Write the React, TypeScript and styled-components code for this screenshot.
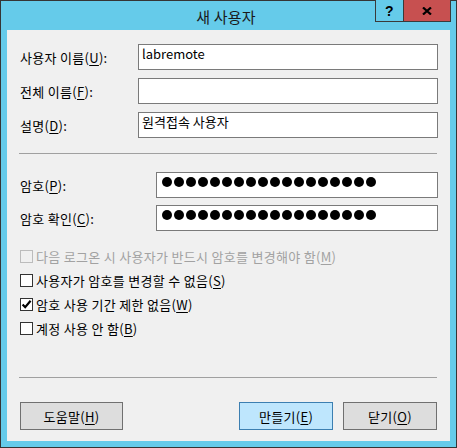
import React from "react";
import styled, { createGlobalStyle } from "styled-components";

const Global = createGlobalStyle`
  html, body { margin: 0; padding: 0; background: #ffffff; overflow: hidden; }
  body { font-family: "Noto Sans CJK KR", "Noto Sans", sans-serif; }
  * { box-sizing: border-box; }
`;

const FONT = `"Noto Sans CJK KR", "Noto Sans", sans-serif`;

const Window = styled.div`
  width: 457px;
  height: 448px;
  border: 1px solid #353535;
  background: #65cbea;
  padding: 0 6px 6px;
  display: flex;
  flex-direction: column;
  font-family: ${FONT};
  font-size: 13px;
  letter-spacing: 0.3px;
  color: #000;
`;

const TitleBar = styled.div`
  height: 29px;
  margin: 0 -6px;
  padding-right: 5px;
  display: grid;
  grid-template-columns: 1fr auto 1fr;
  align-items: start;
`;

const Title = styled.div`
  grid-column: 2;
  font-size: 15px;
  letter-spacing: 0.2px;
  line-height: 26px;
  padding-top: 3px;
  color: #1a1a1a;
  white-space: nowrap;
`;

const Caption = styled.div`
  grid-column: 3;
  justify-self: end;
  display: flex;
  margin-top: -1px;
  height: 22px;
  border-right: 1px solid #3a3a3a;
`;

const CaptionButton = styled.div<{ $close?: boolean }>`
  width: ${(p) => (p.$close ? 47 : 28)}px;
  height: 22px;
  border-left: 1px solid #3a3a3a;
  border-bottom: 1px solid #3a3a3a;
  background: ${(p) => (p.$close ? "#c75050" : "#65cbea")};
  display: flex;
  align-items: center;
  justify-content: center;
  font-family: "Liberation Sans", Arial, sans-serif;
  font-weight: bold;
  font-size: 14px;
  color: #000;
`;

const Client = styled.div`
  flex: 1;
  background: #f0f0f0;
  padding: 14px 12px 11px 12px;
  display: flex;
  flex-direction: column;
`;

const Fields = styled.div<{ $gap: number }>`
  display: flex;
  flex-direction: column;
  gap: ${(p) => p.$gap}px;
`;

const FieldRow = styled.div<{ $label: number }>`
  display: grid;
  grid-template-columns: ${(p) => p.$label}px 1fr;
  align-items: center;
  height: 26px;
`;

const Label = styled.label`
  padding-left: 1px;
  line-height: 17px;
  white-space: nowrap;
`;

const Key = styled.span`
  text-decoration: underline;
  text-underline-offset: 2px;
`;

const TextBox = styled.div`
  height: 26px;
  border: 1px solid #7a7a7a;
  background: #fff;
  padding: 0 3px;
  line-height: 18px;
  letter-spacing: 0;
  white-space: nowrap;
`;

const PassBox = styled.div`
  height: 26px;
  border: 1px solid #7a7a7a;
  background: #fff;
  padding: 4px 5px 0;
  display: flex;
  gap: 2px;
  align-items: flex-start;
`;

const Dot = styled.span`
  width: 10px;
  height: 10px;
  border-radius: 50%;
  background: #000;
  flex: none;
`;

const Separator = styled.div<{ $top: number; $bottom: number }>`
  height: 1px;
  background: #a0a0a0;
  margin: ${(p) => p.$top}px 1px ${(p) => p.$bottom}px 0;
`;

const Checks = styled.div`
  margin-top: 19px;
  display: flex;
  flex-direction: column;
  gap: 11px;
  padding-left: 1px;
`;

const CheckRow = styled.div<{ $disabled?: boolean }>`
  height: 13px;
  display: flex;
  align-items: center;
  gap: 3px;
  line-height: 17px;
  white-space: nowrap;
  color: ${(p) => (p.$disabled ? "#a2a2a2" : "#000")};
`;

const Box = styled.span<{ $disabled?: boolean }>`
  width: 13px;
  height: 13px;
  flex: none;
  border: 1px solid ${(p) => (p.$disabled ? "#bcbcbc" : "#333333")};
  background: ${(p) => (p.$disabled ? "#f0f0f0" : "#ffffff")};
  display: flex;
  align-items: center;
  justify-content: center;
`;

const Spacer = styled.div`
  flex: 1;
`;

const ButtonBar = styled.div`
  display: flex;
  align-items: center;
  padding: 0 1px;
`;

const Button = styled.div<{ $w: number; $default?: boolean }>`
  width: ${(p) => p.$w}px;
  height: 28px;
  border: 1px solid ${(p) => (p.$default ? "#3c7fb1" : "#707070")};
  background: ${(p) => (p.$default ? "#bee6fd" : "#dddddd")};
  display: flex;
  align-items: center;
  justify-content: center;
  line-height: 17px;
  white-space: nowrap;
`;

const ButtonGroup = styled.div`
  margin-left: auto;
  display: flex;
  gap: 10px;
`;

const Check = () => (
  <svg width="11" height="11" viewBox="0 0 11 11">
    <path d="M1.6 5.4 L4.2 8.2 L9.6 1.8" fill="none" stroke="#000" strokeWidth="2.2" />
  </svg>
);

const CloseGlyph = () => (
  <svg width="10" height="8" viewBox="0 0 10 8">
    <path d="M1 0.5 L9 7.5 M9 0.5 L1 7.5" stroke="#000" strokeWidth="2.2" />
  </svg>
);

const L = ({ text, k, colon = true }: { text: string; k: string; colon?: boolean }) => (
  <>
    {text}(<Key>{k}</Key>){colon ? ":" : ""}
  </>
);

export default function App() {
  const dots = Array.from({ length: 18 });
  const checks = [
    { text: "다음 로그온 시 사용자가 반드시 암호를 변경해야 함", k: "M", checked: false, disabled: true },
    { text: "사용자가 암호를 변경할 수 없음", k: "S", checked: false, disabled: false },
    { text: "암호 사용 기간 제한 없음", k: "W", checked: true, disabled: false },
    { text: "계정 사용 안 함", k: "B", checked: false, disabled: false },
  ];
  return (
    <>
      <Global />
      <Window>
        <TitleBar>
          <Title>새 사용자</Title>
          <Caption>
            <CaptionButton>?</CaptionButton>
            <CaptionButton $close>
              <CloseGlyph />
            </CaptionButton>
          </Caption>
        </TitleBar>
        <Client>
          <Fields $gap={8}>
            <FieldRow $label={119}>
              <Label><L text="사용자 이름" k="U" /></Label>
              <TextBox>labremote</TextBox>
            </FieldRow>
            <FieldRow $label={119}>
              <Label><L text="전체 이름" k="F" /></Label>
              <TextBox />
            </FieldRow>
            <FieldRow $label={119}>
              <Label><L text="설명" k="D" /></Label>
              <TextBox>원격접속 사용자</TextBox>
            </FieldRow>
          </Fields>
          <Separator $top={15} $bottom={18} />
          <Fields $gap={7}>
            <FieldRow $label={137}>
              <Label><L text="암호" k="P" /></Label>
              <PassBox aria-label="password">
                {dots.map((_, i) => <Dot key={i} />)}
              </PassBox>
            </FieldRow>
            <FieldRow $label={137}>
              <Label><L text="암호 확인" k="C" /></Label>
              <PassBox aria-label="confirm password">
                {dots.map((_, i) => <Dot key={i} />)}
              </PassBox>
            </FieldRow>
          </Fields>
          <Checks>
            {checks.map((c) => (
              <CheckRow key={c.k} $disabled={c.disabled}>
                <Box $disabled={c.disabled}>{c.checked && <Check />}</Box>
                <span><L text={c.text} k={c.k} colon={false} /></span>
              </CheckRow>
            ))}
          </Checks>
          <Spacer />
          <Separator $top={0} $bottom={24} />
          <ButtonBar>
            <Button $w={103}><L text="도움말" k="H" colon={false} /></Button>
            <ButtonGroup>
              <Button $w={94} $default><L text="만들기" k="E" colon={false} /></Button>
              <Button $w={94}><L text="닫기" k="O" colon={false} /></Button>
            </ButtonGroup>
          </ButtonBar>
        </Client>
      </Window>
    </>
  );
}
